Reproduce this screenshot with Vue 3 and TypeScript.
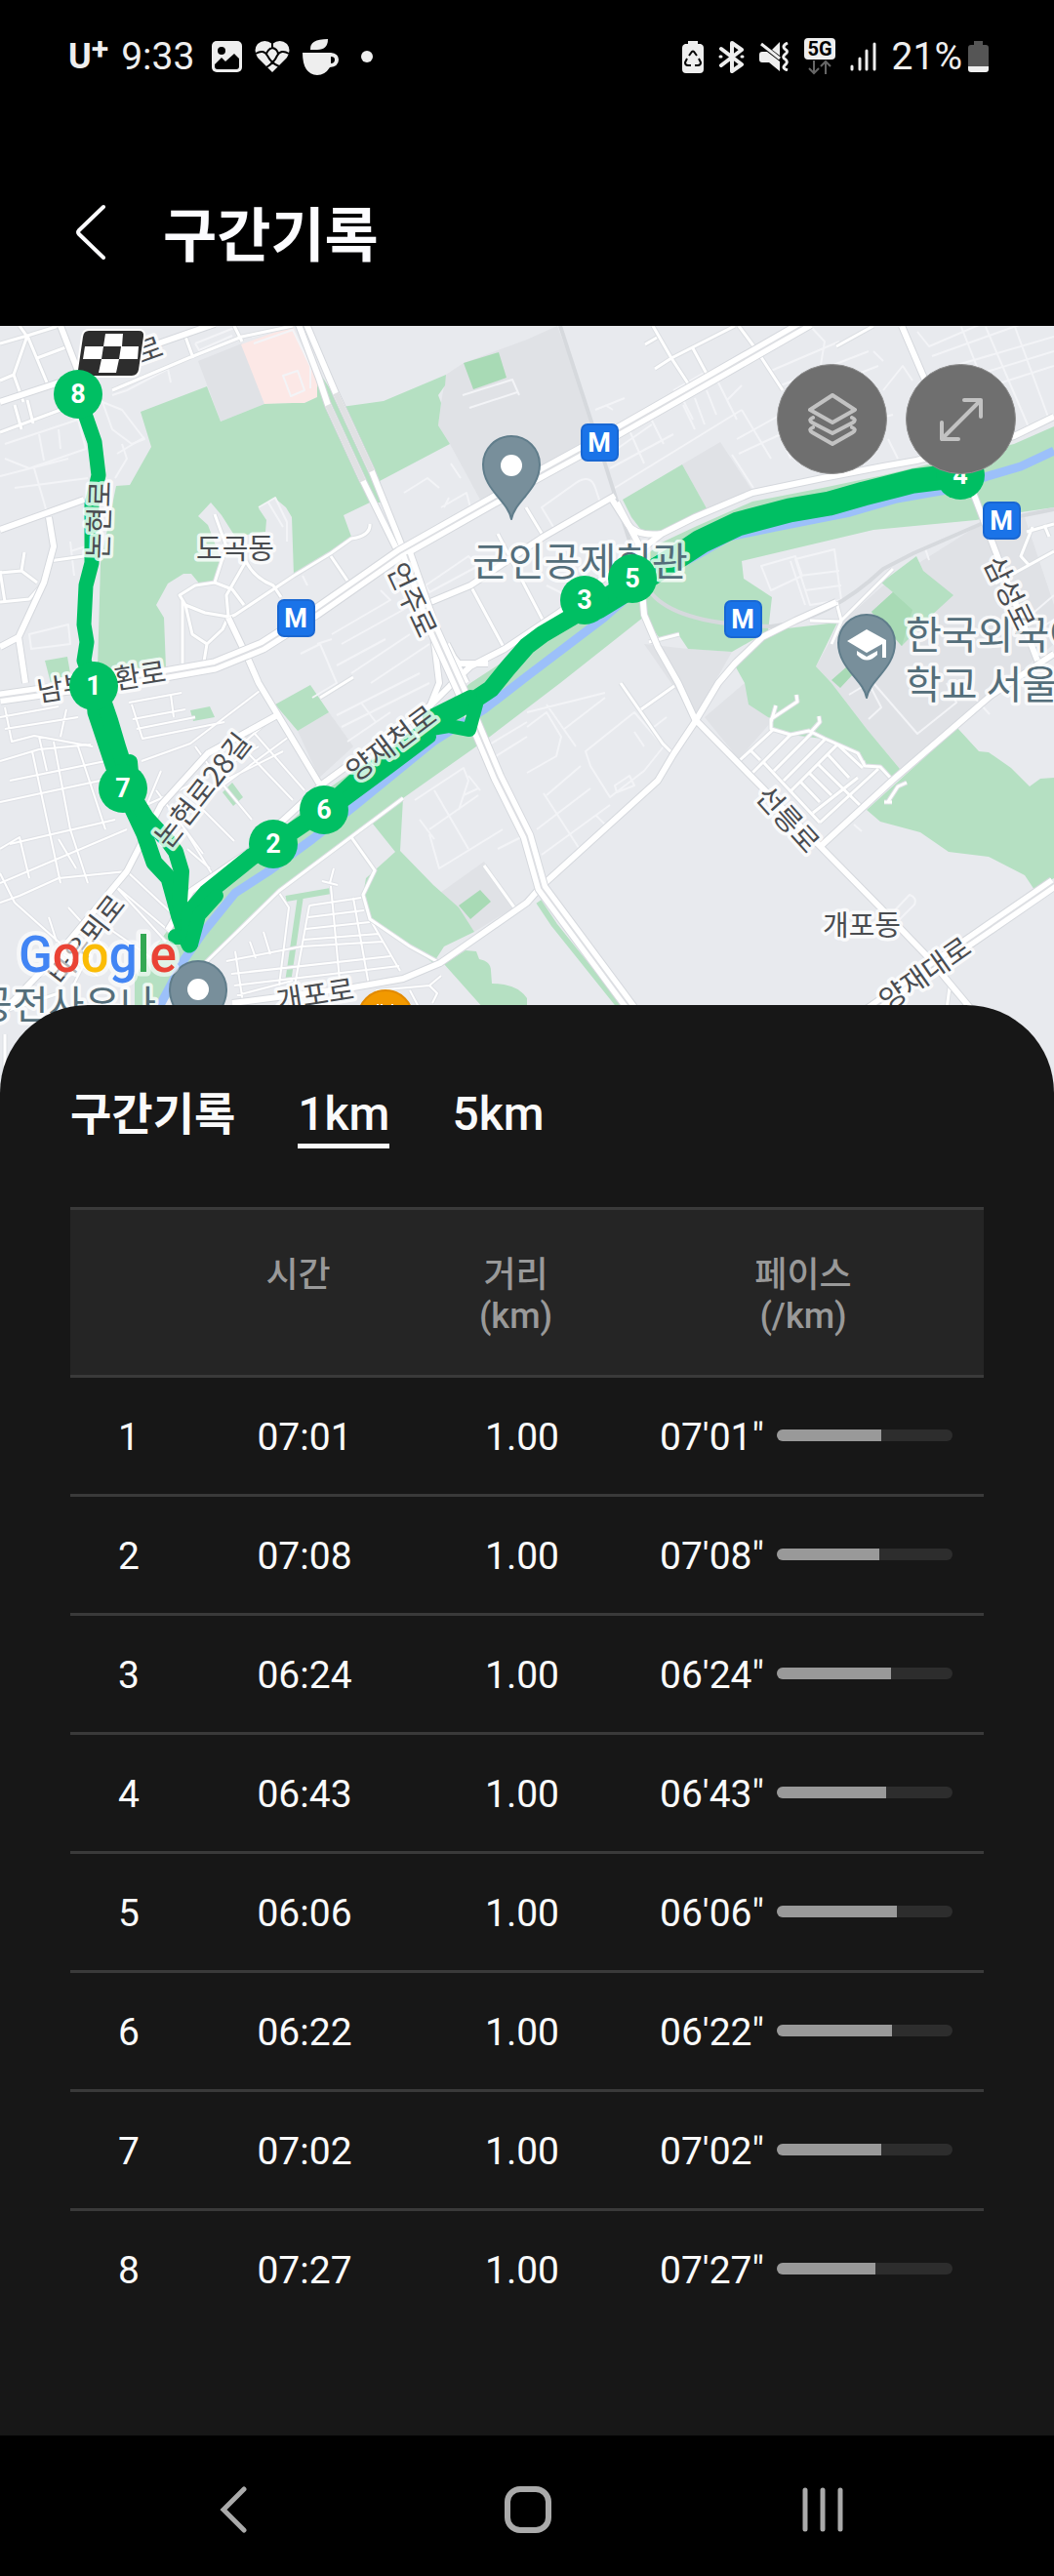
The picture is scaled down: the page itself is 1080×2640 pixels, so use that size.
<script setup lang="ts">
import { ref } from 'vue'

interface Split {
  no: number
  seconds: number
}

interface MapLabel {
  text: string
  x: number
  y: number
  angle: number
}

const splits: Split[] = [421, 428, 384, 403, 366, 382, 422, 447].map((seconds, i) => ({
  no: i + 1,
  seconds,
}))

const units = ['1km', '5km']
const activeUnit = ref('1km')

const pad = (n: number) => String(n).padStart(2, '0')
const clock = (s: number) => `${pad(Math.floor(s / 60))}:${pad(s % 60)}`
const pace = (s: number) => `${pad(Math.floor(s / 60))}'${pad(s % 60)}"`
const barWidth = (s: number) => `${(25000 / s).toFixed(1)}%`

const roadLabels: MapLabel[] = [
  { text: '로', x: 153, y: 359, angle: -20 },
  { text: '논현로', x: 102, y: 533, angle: -88 },
  { text: '도곡동', x: 241, y: 563, angle: 0 },
  { text: '언주로', x: 422, y: 615, angle: 65 },
  { text: '남부순환로', x: 104, y: 699, angle: -9 },
  { text: '논현로28길', x: 208, y: 810, angle: -52 },
  { text: '양재천로', x: 401, y: 762, angle: -37 },
  { text: '바우뫼로', x: 89, y: 963, angle: -52 },
  { text: '개포로', x: 323, y: 1020, angle: -9 },
  { text: '선릉로', x: 807, y: 840, angle: 48 },
  { text: '개포동', x: 883, y: 949, angle: 0 },
  { text: '양재대로', x: 948, y: 998, angle: -35 },
  { text: '삼성로', x: 1034, y: 608, angle: 64 },
]

const stations = [
  { x: 303, y: 633 },
  { x: 614, y: 453 },
  { x: 1026, y: 533 },
  { x: 761, y: 634 },
]

const markers = [
  { n: 8, x: 80, y: 404 },
  { n: 1, x: 96, y: 703 },
  { n: 7, x: 126, y: 808 },
  { n: 2, x: 280, y: 865 },
  { n: 6, x: 332, y: 830 },
  { n: 3, x: 599, y: 615 },
  { n: 5, x: 648, y: 593 },
  { n: 4, x: 984, y: 487 },
]

const wideRoads = [
  'M0 715 L169 691 L220 682 L269 662 L324 627 L410 567 L516 507 L540 493 L633 442 L733 385 L829 330',
  'M888 1038 L990 967 L1080 905',
  'M417 568 L444 645 L472 707 L510 797 L540 857 L555 910 L647 1034',
]

const mainRoads = [
  'M305 330 L327 388 L336 415 L372 493 L406 562',
  'M313 330 L344 403 L381 483 L412 560',
  'M172 953 L196 913 L255 873 L331 803 L441 723 L461 703 L482 683 L517 665 L574 627 L678 547 L712 530 L771 505 L843 490 L905 478 L939 472 L1039 447 L1080 427',
  'M444 650 L450 700 L440 725 M450 655 L470 680 L500 680 M458 660 L478 700',
  'M626 510 L643 537 Q652 550 678 547',
  'M632 515 L654 557 L660 630 L674 663 L695 700 L712 737 L781 807 L840 867 L902 930 L950 980 L995 1034',
  'M840 868 L914 800 L1015 713 L1080 670',
  'M238 1028 L362 1012 L413 1003 L451 987 L540 925 L555 908 L674 800 L690 773 L712 740 L736 700 L753 680 L781 653 L815 636 L857 617',
  'M284 733 L213 772 L165 825 L130 893 L62 975 L0 1040',
  'M234 633 L255 677 L265 700 L327 803',
  'M924 334 L945 383 L990 480 L998 507 L1022 570 L1063 677',
  'M0 412 L79 386 L148 357 L220 332',
  'M62 334 L81 383',
  'M0 543 L86 512',
  'M50 530 L55 560 L45 597 L19 653 L26 700 M0 663 L19 653',
  'M441 617 L482 600 L557 550 L630 508',
]

const sideRoads = [
  'M482 600 L517 665 M510 547 L557 637 M539 520 L557 550 M339 570 L356 595',
  'M688 367 L753 334 M669 334 L688 367 L705 393 M710 357 L724 383 M671 378 L688 367 M661 353 L673 346 M757 334 L774 357 L802 400 M857 355 L895 334',
  'M115 400 L193 367 L248 345 L300 334 M240 334 L248 350 M190 345 L198 367',
  'M0 443 L62 420 M15 415 L22 440 M28 410 L34 434 M0 352 L28 344 L60 334 M28 344 L14 384 L24 412 M28 344 L48 392 M0 390 L14 384 M38 367 L70 355 M20 334 L30 348',
  'M379 537 Q380 549 360 552 L339 567 L301 590 L241 630 L234 633 M234 632 L210 628 L190 620 L184 610 L200 600 L220 597 L232 560 L220 527 M252 575 Q260 592 280 600 L288 612 M252 575 L232 610 L234 632 M220 597 L238 604 L250 620 M187 615 L187 680 M190 620 L197 650 L212 660 L228 645 L234 632 M212 660 L209 678',
  'M0 617 L30 614 L45 597 M50 575 L86 570 M0 585 L5 617 M25 566 L22 585 L38 597 M22 585 L0 587',
  'M413 818 L286 913 L241 957 L207 990 M360 858 L384 892 L372 917 L379 942 L420 970 L451 987 M496 887 L527 930',
  'M636 700 L679 762 L690 773 M657 727 L691 703 M328 715 L362 694 M665 658 L696 650 M857 617 L862 636 L915 583 M830 636 L862 637 L852 660',
  'M757 780 L793 747 M771 792 L810 753 M783 782 L840 843 M793 790 L833 750 M803 800 L845 758 M809 812 L858 763 M833 833 L879 797 M840 843 L900 788 M858 763 L884 787 M848 773 L870 797 M838 783 L883 827 M829 792 L852 815 M821 802 L840 822 M769 769 L779 779',
  'M914 799 L902 786 L886 785 L879 772 L845 757 L829 749 L810 753 L790 747 L790 737 L817 719 L816 712 M790 740 L795 723 M831 750 L840 740 L839 734 M886 785 L884 780',
  'M914 822 L906 822 M909 823 L920 806 L929 802 M1058 540 L1046 570 L1055 580 M1052 545 L1080 537 M1070 538 L1075 550 M1020 598 L1080 565',
  'M973 1012 L970 1034 M973 1012 L998 1034 M0 1038 L60 1018 M5 1060 L5 1110',
]

const streets = [
  'M0 735 L60 724 M5 747 L80 735 M5 725 L12 760 L35 754 L95 765 M68 727 L62 755 M40 755 L48 790 M0 780 L40 768 L93 763 M10 800 L108 780 M0 822 L112 798 M10 865 L118 840 M0 870 L20 858 L30 900 M33 770 L62 905 M55 760 L72 850 L90 905 M80 765 L108 850 M0 905 L130 850 M0 925 L20 918 M15 925 L62 967 M20 918 L60 900 L130 893 M0 895 L15 925 M60 860 L78 890',
  'M132 720 L186 710 M136 737 L190 727 M140 747 L200 735 M175 712 L178 735 M135 722 L146 757 L230 740 M145 780 L195 762 L270 705 M165 790 L140 850 M150 825 L205 800 L282 733 M200 765 L225 800 L258 840 M238 755 L300 820 M255 745 L312 810 M160 810 L208 875 M230 800 L290 770 M215 815 L296 755 M208 830 L240 862 M192 870 L215 890 M240 780 L265 765 M186 845 L220 900',
  'M115 905 L180 960 M130 893 L175 935 M60 975 L100 1000 M95 940 L160 985 M70 930 L120 985 M50 940 L58 965 M100 960 L75 1010 M120 910 L170 965',
  'M232 985 L309 970 L392 965 M237 998 L400 980 M240 1010 L409 990 M243 1020 L300 1005 M241 975 L250 1034 M256 965 L262 982 M270 955 L277 978 M286 915 L296 930 L286 1010 M317 928 L370 920 M316 940 L373 933 M313 952 L379 945 M311 963 L388 957 M317 928 L302 1010 M339 908 L348 1005 M362 920 L378 1010 M379 942 L410 995 M342 890 L338 905 L346 907 M330 903 L338 905',
  'M385 1015 L440 1010 L448 1018 L443 1028 M440 1010 L452 1000 M420 1015 L430 1034',
]

const lanes = [
  'M5 455 L80 430 L88 460 L30 480 L5 470 M40 445 L45 472 M0 488 L70 470 M15 500 L90 490 M35 480 L48 525 M60 440 L62 460 M105 412 L125 420 L148 450 L135 455 L115 440 Z M125 455 L130 470 L118 490 M115 405 L130 400 L172 378 M172 378 L175 392',
  'M200 352 L240 336 M200 352 L204 359 L238 344 M260 352 L300 338 L318 375 L318 398 M290 385 L305 380 L312 400 L298 406 Z M258 345 L298 335',
  'M474 405 L525 389 L532 405 M481 418 L530 402 M414 505 L438 490 L450 500 M452 520 L478 505 L482 520 M460 510 L455 520 M462 475 L472 490 M340 650 L400 615 L390 605 M308 670 L328 660 L345 700 L320 715 M350 660 L440 610 M345 682 L395 655 M360 690 L420 650 M380 700 L440 660 M325 660 L340 655 M436 600 L480 570 L490 580 L440 607 Z M30 650 L70 640 L72 660 L32 665 Z M72 565 L88 560 M72 555 L76 590',
  'M265 520 L282 510 L294 535 L294 555 M275 515 L290 540 M310 590 L315 600 M120 465 L148 448',
  'M610 420 L640 408 M620 415 L628 420 M625 465 L668 435 M625 480 L690 445 M630 500 L760 420 M640 430 L660 475 M665 425 L680 455 M690 400 L725 380 M650 440 L700 410 L710 430 M700 415 L712 440 M712 408 L722 435 M724 400 L734 425 M735 390 L755 430 M745 410 L760 395 M755 450 L800 425 M757 465 L800 445 L810 470 M750 466 L772 500 M760 420 L790 470 M790 380 L860 350 M800 395 L890 360 M810 410 L900 375 M895 360 L905 370 M830 334 L845 350 L840 380',
  'M940 340 L952 355 L1080 300 M955 365 L1075 322 M960 380 L1080 345 M965 395 L1080 360 M970 410 L1080 375 M985 335 L1030 450 M1010 335 L1055 440 M1040 335 L1075 430 M905 400 L925 375 L935 390 M895 430 L915 425 M910 450 L920 470',
  'M555 520 L590 495 Q605 485 610 500 L615 515 L570 545 Z M560 600 L580 610 M575 640 L545 645 M780 580 L815 570 L822 590 L790 605 Z M815 573 L855 563 L862 615 L830 620 Z M820 590 L860 585 M825 605 L862 600 M810 575 L825 620 M948 562 L952 574',
  'M345 733 L430 690 M350 745 L440 700 M356 760 L400 730 M370 720 L385 740 M425 820 L475 787 L480 800 L470 830 M440 850 L490 815 M430 840 L445 860 M445 810 L480 870 M480 795 L492 810 M440 855 L450 890 L515 850 M500 780 L540 755 M490 770 L540 740 M475 815 L490 808 M510 870 L540 855',
  'M540 745 L560 730 L575 755 L570 775 L540 792 M540 730 L620 710 M560 722 L590 765 M577 748 L620 715 M600 770 L650 730 L680 765 L660 790 L625 817 L605 785 Z M630 805 L645 795 L650 805 L632 812 Z M650 750 L660 765 M560 815 L595 785 M550 850 L605 808 M555 876 L625 825 M557 813 L595 872 M610 835 L625 850 M670 745 L683 735',
  'M870 712 L890 700 L903 725 L890 737 M895 700 L940 752 L980 720 L970 700 M915 935 L932 917 Q940 920 937 927 L922 942 Z M985 700 L1014 732 M875 845 L883 852 M1045 640 L1080 610 M1055 650 L1080 635',
]
</script>

<template>
  <div class="screen">
    <div class="status">
      <div class="status-side left">
        <span class="carrier">U<sup>+</sup></span>
        <span class="status-text">9:33</span>
        <svg class="gallery" width="31" height="32" viewBox="0 0 31 32">
          <rect width="31" height="32" rx="5" fill="#eee" />
          <circle cx="10" cy="10" r="4" />
          <path d="M3 24 L10 17 L14 21 L23 13 L28 18 V26 Q28 29 25 29 H6 Q3 29 3 26 Z" />
        </svg>
        <svg width="36" height="34" viewBox="0 0 36 34">
          <path d="M18 33 L3 18 Q-2 10 3 4 Q10 -2 18 4 Q26 -2 33 4 Q38 10 33 18 Z" fill="#eee" />
          <path d="M1 14 Q9 9 13 16 Q17 24 25 27 M35 14 Q27 9 23 16 Q20 23 12 28 M12 14 Q14 9 18 8 Q23 9 24 14 M18 3 V8" fill="none" stroke="#000" stroke-width="2" />
        </svg>
        <svg width="37" height="38" viewBox="0 0 37 38">
          <path d="M0 15 H29 Q37 16 37 22 Q37 29 28 30 Q23 38 15 38 Q0 37 0 15 Z M29 19 V26 Q33 26 33 22 Q33 19 29 19 Z" fill="#eee" fill-rule="evenodd" />
          <path d="M8 12 Q7 1 26 1 Q26 12 15 12 Z" fill="#eee" />
        </svg>
        <span class="dot"></span>
      </div>
      <div class="status-side">
        <svg width="22" height="33" viewBox="0 0 22 33">
          <path d="M6 0 H16 V3 H19 Q22 4 22 7 V29 Q22 33 18 33 H4 Q0 33 0 29 V7 Q0 4 3 3 H6 Z" fill="#eee" />
          <path d="M7 15 L10 11 Q11 10 12 11 L15 15 M17 18 L19 22 Q19 25 16 25 H13 M9 25 H6 Q3 25 3 22 L5 18" fill="none" stroke="#000" stroke-width="2" />
        </svg>
        <svg width="27" height="33" viewBox="0 0 27 33" fill="none" stroke="#eee" stroke-width="4" stroke-linejoin="round" stroke-linecap="round">
          <path d="M3 8 L24 24 L14 31 V2 L24 9 L3 25" />
          <path d="M2 16 h1 M24 16 h1" stroke-width="3" />
        </svg>
        <svg width="31" height="30" viewBox="0 0 31 30">
          <path d="M0 13 Q0 10 3 10 H8 L21 20 V30 L10 21 H3 Q0 21 0 18 Z M13 8 L21 0 V14 Z" fill="#eee" />
          <path d="M2 2 L21 17" stroke="#eee" stroke-width="3" />
          <path d="M29 1 Q23 4 26 7 Q31 10 26 13 Q23 16 27 18 Q30 21 26 24 Q23 27 29 29" fill="none" stroke="#eee" stroke-width="3" />
        </svg>
        <svg width="32" height="38" viewBox="0 0 32 38">
          <rect width="32" height="22" rx="4" fill="#eee" />
          <text x="16" y="18" text-anchor="middle" class="five-g">5G</text>
          <path d="M10 23 V36 M5 31 L10 36 L15 31 M22 37 V24 M17 29 L22 24 L27 29" fill="none" stroke="#666" stroke-width="2" />
        </svg>
        <svg width="27" height="30" viewBox="0 0 27 30" stroke="#eee" stroke-width="3" stroke-linecap="round">
          <path d="M2 25 V28 M10 17 V28 M17 9 V28 M25 2 V28" />
        </svg>
        <span class="status-text percent">21%</span>
        <svg class="battery" width="21" height="32" viewBox="0 0 21 32">
          <path d="M6 0 H15 V4 H18 Q21 4 21 7 V26 H0 V7 Q0 4 3 4 H6 Z" fill="#555" />
          <path d="M0 26 H21 V29 Q21 32 18 32 H3 Q0 32 0 29 Z" fill="#eee" />
        </svg>
      </div>
    </div>

    <header class="header">
      <button class="back" type="button" aria-label="뒤로">
        <svg width="32" height="58" viewBox="0 0 32 58" fill="none" stroke="#fcfcff" stroke-width="4" stroke-linecap="round" stroke-linejoin="round">
          <path d="M29 3 L4 27 Q2 29 4 31 L29 55" />
        </svg>
      </button>
      <h1>구간기록</h1>
    </header>

    <section class="map" aria-label="지도">
      <svg class="map-canvas" viewBox="0 334 1080 788">
        <rect y="334" width="1080" height="788" fill="#e8eaee" />

        <g fill="#e0e2e6">
          <path d="M203 370 L248 352 L271 414 L226 432 Z" />
          <path d="M457 384 L475 372 L540 348 L571 334 L614 450 L492 512 L461 455 L449 436 L452 413 Z" />
          <path d="M699 476 L738 453 L771 503 L724 521 Z" />
          <path d="M305 749 L337 730 L362 765 L327 797 Z" />
          <path d="M451 915 L496 883 L527 930 L486 955 Z" />
          <path d="M836 683 L860 640 L905 600 L1000 540 L1050 530 L1080 620 L1080 660 L1015 713 L922 788 L888 747 L852 700 Z" />
          <path d="M660 660 L705 665 L750 668 L712 735 Z M722 735 L763 700 L790 740 L757 778 Z" />
        </g>
        <path fill="#fce8e6" d="M247 353 L300 334 L305 347 L326 392 L325 407 L312 413 L271 414 Z" />

        <g fill="#b5e0c2">
          <path d="M144 422 L212 396 L226 432 L271 414 L300 413 L312 413 L325 407 L325 378 L350 417 L393 411 L457 384 L456 395 L449 405 L452 413 L449 436 L461 455 L389 493 L392 515 L379 515 L352 528 L360 550 L339 567 L301 590 L299 530 L293 520 L281 510 L265 521 L273 533 L272 545 L241 550 L227 528 L216 515 L203 529 L213 538 L227 575 L220 597 L205 599 L196 588 L188 588 L172 598 L160 620 L168 633 L170 685 L100 685 L103 577 L119 498 L133 497 L155 458 Z" />
          <path d="M138 1034 L138 1000 L196 920 L255 880 L331 812 L441 735 L482 700 L574 640 L678 556 L712 540 L771 514 L843 500 L905 487 L1039 455 L1080 437 L1080 520 L1046 525 L1000 533 L895 543 L760 575 L762 593 L791 612 L787 647 L750 668 L705 665 L695 650 L678 657 L660 632 L574 700 L498 758 L413 818 L286 913 L213 983 L162 1034 Z" />
          <path d="M638 512 L699 476 L724 521 L692 543 L660 547 L647 530 Z" />
          <path d="M781 657 L798 645 L858 638 L836 683 L852 700 L888 747 L922 788 L914 799 L902 785 L886 785 L879 772 L843 757 L810 753 L790 747 L790 737 L767 722 L763 700 L753 682 Z" />
          <path d="M981 746 L1003 770 L1013 771 L1036 787 L1055 806 L1066 798 L1080 797 L1080 900 L1060 912 L1050 897 L1013 878 L972 873 L943 853 L902 842 L888 830 Z" />
          <path d="M939 570 L946 585 L977 610 L953 632 L924 662 L893 627 L915 607 L903 597 Z" />
          <path d="M282 722 L318 702 L337 730 L305 749 Z M195 728 L215 724 L220 735 L198 739 Z M228 812 L238 802 L249 817 L239 826 Z M46 677 L69 673 L72 690 L52 700 Z" />
          <path d="M381 843 L413 818 L410 872 L444 907 L470 930 L486 955 L455 970 L444 987 L417 967 L379 940 L372 917 L375 900 L405 873 Z" />
          <path d="M455 988 L477 974 L488 975 L491 983 Q503 985 503 995 L504 1008 Q530 1008 540 1023 L540 1034 L496 1034 Z" />
        </g>
        <g fill="#a8dab5">
          <path d="M475 372 L511 361 L519 387 L485 399 Z M470 928 L492 912 L503 924 L482 942 Z M893 627 L915 607 L935 625 L924 662 Z M852 697 L868 683 L875 690 L861 705 Z" />
        </g>
        <path d="M293 921 L339 913 M308 918 L295 1007 M552 924 L568 948 L592 978 L637 1034" fill="none" stroke="#b5e0c2" stroke-width="6" />

        <path fill="none" stroke="#9cc0fa" stroke-width="9" d="M162 1034 L189 983 L207 957 L241 915 L275 893 L320 860 L362 827 L444 760 L496 727 L540 693 L619 633 L645 610 L678 588 L712 570 L747 550 L795 540 L871 525 L919 511 L970 502 L1012 488 L1046 478 L1080 462" />

        <path v-for="d in lanes" :key="d" :d="d" class="lane" />
        <path v-for="d in streets" :key="'c' + d" :d="d" class="street-case" />
        <path v-for="d in streets" :key="d" :d="d" class="street" />
        <g class="rail">
          <path d="M574 334 L616 463 L650 570 M665 605 Q690 640 790 642 Q850 635 905 583 L936 567 L1005 537 L1080 522" />
        </g>
        <path v-for="d in sideRoads" :key="'c' + d" :d="d" class="side-case" />
        <path v-for="d in sideRoads" :key="d" :d="d" class="side-road" />
        <path v-for="d in mainRoads" :key="'c' + d" :d="d" class="main-case" />
        <path v-for="d in mainRoads" :key="d" :d="d" class="main-road" />
        <path v-for="d in wideRoads" :key="'c' + d" :d="d" class="wide-case" />
        <path v-for="d in wideRoads" :key="d" :d="d" class="wide-road" />
        <path v-for="d in wideRoads" :key="'m' + d" :d="d" class="wide-middle" />
        <path d="M336 415 L372 493 M344 403 L381 483" fill="none" stroke="#e0e1e3" stroke-width="6" />

        <g class="route">
          <path stroke-width="15" d="M80 404 L88 427 L97 453 L101 487 L94 517 L94 577 L88 600 L86 640 L89 658 L86 677 L96 703" />
          <path stroke-width="17" d="M96 703 L98 730 L117 787 L126 808 L148 855 L158 884 L173 900 L184 940 L194 968" />
          <path stroke-width="16" d="M100 700 L113 738 L121 765 L129 790 L133 781 L136 815 L150 838 L172 862 L180 873 L186 893 L184 925 L194 960 L180 960" />
          <path stroke-width="18" d="M194 966 L195 935 L212 915 L258 878 L280 865 L332 830 L365 800 L408 773 L445 740 L482 720 L503 706 L520 685 L540 662 L556 650 L590 630 L605 622 L648 594 L695 567 L712 558" />
          <path stroke-width="14" d="M196 968 L204 938 L222 918 M436 748 L460 744 L481 748 L488 722 M350 822 L400 785 L440 755 M440 735 L482 714" />
          <path stroke-width="25" d="M600 618 L612 622 L648 600 L706 563 L718 555 L756 537 L809 523 L850 516 L885 506 L936 493 L984 487" />
        </g>

        <g class="place">
          <text x="484" y="590">군인공제회관</text>
          <text x="928" y="665">한국외국어</text>
          <text x="928" y="716">학교 서울</text>
          <text x="-24" y="1044">공전사우나</text>
        </g>
        <g class="road-label">
          <text
            v-for="l in roadLabels"
            :key="l.text + l.x"
            :transform="`translate(${l.x} ${l.y}) rotate(${l.angle})`"
            y="10"
          >{{ l.text }}</text>
        </g>

        <g fill="#788f9b" stroke="#607d8b" stroke-width="2">
          <path d="M524 532 C521 514 495 502 495 476 A29 29 0 0 1 553 476 C553 502 527 514 524 532 Z" />
          <path d="M888 715 C885 697 859 685 859 659 A29 29 0 0 1 917 659 C917 685 891 697 888 715 Z" />
          <path d="M203 1070 C200 1052 174 1040 174 1014 A29 29 0 0 1 232 1014 C232 1040 206 1052 203 1070 Z" />
        </g>
        <circle cx="524" cy="477" r="11" fill="#fff" />
        <circle cx="203" cy="1014" r="11" fill="#fff" />
        <path fill="#fff" d="M868 657 L888 645 L908 656 V674 H904 V660 L888 669 Z M878 667 L888 673 L899 667 V671 Q888 682 878 671 Z" />
        <circle cx="395" cy="1043" r="28" fill="#f29900" stroke="#e28a00" stroke-width="2" />
        <path d="M387 1029 V1040 M391 1029 V1040 M402 1029 V1040" stroke="#fff" stroke-width="2" />

        <g v-for="s in stations" :key="s.x" class="station">
          <rect :x="s.x - 18" :y="s.y - 18" width="37" height="37" rx="6" />
          <text :x="s.x" :y="s.y + 10">M</text>
        </g>

        <path d="M91 338 H142 Q149 338 148 345 L143 379 Q142 386 135 386 H86 Q78 386 79 379 L84 345 Q85 338 91 338 Z" fill="#2d2d2d" stroke="#fff" stroke-width="2" />
        <path fill="#fff" d="M108 342 H126 L125 355 H106 Z M87 355 H106 L104 368 H85 Z M124 355 H142 L141 368 H122 Z M104 368 H122 L119 382 H101 Z" />

        <g v-for="m in markers" :key="m.n" class="marker">
          <circle :cx="m.x" :cy="m.y" r="25" />
          <text :x="m.x" :y="m.y + 9">{{ m.n }}</text>
        </g>

        <text class="google" x="19" y="996">
          <tspan fill="#4285f4">G</tspan><tspan fill="#ea4335">o</tspan><tspan fill="#fbbc05">o</tspan><tspan fill="#4285f4">g</tspan><tspan fill="#34a853">l</tspan><tspan fill="#ea4335">e</tspan>
        </text>
      </svg>

      <div class="map-tools">
        <button type="button" aria-label="지도 유형">
          <svg width="50" height="54" viewBox="0 0 50 54">
            <path d="M25 2 L48 17 L25 30 L2 17 Z" />
            <path d="M5 25 Q0 27 4 30 L25 41 L46 30 Q50 27 45 25 M5 35 Q0 37 4 40 L25 52 L46 40 Q50 37 45 35" />
          </svg>
        </button>
        <button type="button" aria-label="전체 화면">
          <svg width="46" height="46" viewBox="0 0 46 46">
            <path d="M3 43 L43 3 M26 3 H43 V20 M3 26 V43 H20" />
          </svg>
        </button>
      </div>
    </section>

    <main class="sheet">
      <div class="tabs">
        <h2>구간기록</h2>
        <button
          v-for="u in units"
          :key="u"
          type="button"
          :class="{ active: activeUnit === u }"
          @click="activeUnit = u"
        >{{ u }}</button>
      </div>

      <table>
        <colgroup>
          <col class="col-no" />
          <col class="col-time" />
          <col class="col-dist" />
          <col />
        </colgroup>
        <thead>
          <tr>
            <th></th>
            <th class="shifted">시간</th>
            <th class="shifted">거리<br />(km)</th>
            <th>페이스<br />(/km)</th>
          </tr>
        </thead>
        <tbody>
          <tr v-for="s in splits" :key="s.no">
            <td>{{ s.no }}</td>
            <td>{{ clock(s.seconds) }}</td>
            <td>1.00</td>
            <td>
              <div class="pace">
                <span>{{ pace(s.seconds) }}</span>
                <div class="bar"><div class="fill" :style="{ width: barWidth(s.seconds) }"></div></div>
              </div>
            </td>
          </tr>
        </tbody>
      </table>
    </main>

    <nav class="navbar">
      <button type="button" aria-label="이전">
        <svg width="28" height="48" viewBox="0 0 28 48"><path d="M25 3 L4 24 L25 45" stroke-width="5" /></svg>
      </button>
      <button type="button" aria-label="홈">
        <svg width="48" height="48" viewBox="0 0 48 48"><rect x="3" y="3" width="42" height="42" rx="13" stroke-width="6" /></svg>
      </button>
      <button type="button" aria-label="최근 앱">
        <svg width="44" height="48" viewBox="0 0 44 48"><path d="M4 4 V44 M22 4 V44 M40 4 V44" stroke-width="5" /></svg>
      </button>
    </nav>
  </div>
</template>

<style>
body {
  margin: 0;
  background: #000;
}
</style>

<style scoped>
.screen {
  display: flex;
  flex-direction: column;
  min-height: 100vh;
  overflow: hidden;
  background: #000;
  color: #fafafa;
  font-family: Roboto, 'Noto Sans CJK KR', sans-serif;
}

button {
  padding: 0;
  border: 0;
  background: none;
  color: inherit;
  font: inherit;
}

svg {
  display: block;
}

.status {
  display: flex;
  justify-content: space-between;
  height: 116px;
  padding: 0 67px 0 70px;
}

.status-side {
  display: flex;
  align-items: center;
  gap: 15px;
  color: #eee;
}

.status-side.left {
  gap: 13px;
}

.gallery {
  margin-left: 5px;
}

.status-text {
  font-size: 39px;
  line-height: 46px;
}

.percent {
  margin-left: 1px;
}

.battery {
  margin-left: -9px;
}

.carrier {
  display: flex;
  align-items: center;
  font-size: 36px;
  font-weight: 700;
  line-height: 46px;
}

.carrier sup {
  margin-top: -16px;
  font-size: 32px;
  line-height: 32px;
}

.dot {
  width: 12px;
  height: 12px;
  margin-left: 10px;
  border-radius: 50%;
  background: #eee;
}

.five-g {
  fill: #000;
  font-size: 20px;
  font-weight: 700;
}

.header {
  display: flex;
  align-items: center;
  gap: 58px;
  height: 218px;
  padding: 0 77px;
}

.header h1 {
  margin: 36px 0 0;
  color: #fcfcff;
  font-size: 60px;
  font-weight: 700;
  line-height: 72px;
}

.back {
  margin-top: 26px;
}

.map {
  position: relative;
}

.map-canvas {
  width: 100%;
  height: auto;
}

.map-canvas path {
  stroke-linejoin: round;
}

.lane,
.street,
.street-case,
.side-road,
.side-case,
.main-case,
.main-road,
.wide-case,
.wide-road,
.wide-middle,
.rail {
  fill: none;
}

.lane {
  stroke: #f3f4f7;
  stroke-width: 2;
}

.street-case {
  stroke: #dfe1e6;
  stroke-width: 4;
}

.street {
  stroke: #fff;
  stroke-width: 2;
}

.rail {
  stroke: #d6d9dd;
  stroke-width: 4;
}

.side-case {
  stroke: #dcdfe3;
  stroke-width: 5;
}

.side-road {
  stroke: #fff;
  stroke-width: 3;
}

.main-case {
  stroke: #d5d8dd;
  stroke-width: 8;
}

.main-road {
  stroke: #fff;
  stroke-width: 6;
}

.wide-case {
  stroke: #d5d8dd;
  stroke-width: 15;
}

.wide-road {
  stroke: #fff;
  stroke-width: 13;
}

.wide-middle {
  stroke: #dddfe3;
  stroke-width: 2;
}

.route {
  fill: none;
  stroke: #00bf63;
  stroke-linecap: round;
}

.place,
.road-label {
  font-family: 'Noto Sans CJK KR', sans-serif;
  paint-order: stroke;
  stroke: rgba(255, 255, 255, 0.8);
  stroke-width: 7px;
  stroke-linejoin: round;
}

.place {
  fill: #546e7a;
  font-size: 40px;
}

.road-label {
  fill: #494c50;
  font-size: 29px;
  text-anchor: middle;
}

.station rect {
  fill: #1a73e8;
  stroke: #1967d2;
  stroke-width: 2;
}

.station text,
.marker text {
  fill: #fff;
  font-size: 27px;
  font-weight: 700;
  text-anchor: middle;
}

.marker circle {
  fill: #00bf63;
}

.google {
  font-size: 51px;
  font-weight: 500;
  paint-order: stroke;
  stroke: rgba(255, 255, 255, 0.6);
  stroke-width: 9px;
  stroke-linejoin: round;
}

.map-tools {
  position: absolute;
  top: 39px;
  right: 39px;
  display: flex;
  gap: 19px;
}

.map-tools button {
  display: grid;
  place-items: center;
  width: 113px;
  height: 113px;
  border: 1px solid #8d8d8d;
  border-radius: 50%;
  background: #6f6f6f;
}

.map-tools svg {
  fill: none;
  stroke: #c2c2c2;
  stroke-width: 4;
  stroke-linecap: round;
  stroke-linejoin: round;
}

.sheet {
  position: relative;
  flex: 1;
  margin-top: -92px;
  padding: 84px 72px 0;
  border-radius: 90px 90px 0 0;
  background: #171717;
}

.tabs {
  display: flex;
  gap: 64px;
  margin-bottom: 60px;
}

.tabs h2 {
  margin: 0;
  font-size: 46px;
  font-weight: 700;
  line-height: 56px;
}

.tabs button {
  padding-bottom: 2px;
  border-bottom: 5px solid transparent;
  font-size: 48px;
  font-weight: 500;
  line-height: 56px;
}

.tabs button.active {
  border-color: #fafafa;
}

table {
  width: 100%;
  border-spacing: 0;
  table-layout: fixed;
}

.col-no {
  width: 120px;
}

.col-time {
  width: 240px;
}

.col-dist {
  width: 206px;
}

th {
  padding: 46px 0 39px;
  border-top: 3px solid #3a3a3a;
  border-bottom: 3px solid #3a3a3a;
  background: #252525;
  color: #999;
  font-size: 36px;
  font-weight: 500;
  line-height: 42px;
  vertical-align: top;
}

th.shifted {
  padding-right: 13px;
}

td {
  height: 116px;
  padding: 3px 0 0;
  border-bottom: 3px solid #3a3a3a;
  font-size: 39px;
  line-height: 46px;
  text-align: center;
}

tbody tr:last-child td {
  border-bottom: 0;
}

.pace {
  display: flex;
  align-items: center;
  justify-content: center;
  gap: 13px;
  padding-left: 6px;
}

.bar {
  overflow: hidden;
  width: 180px;
  height: 12px;
  margin-bottom: 5px;
  border-radius: 6px;
  background: #2d2d2d;
}

.fill {
  height: 100%;
  background: #999;
}

.navbar {
  display: grid;
  grid-template-columns: repeat(3, 1fr);
  height: 144px;
  padding: 0 86px 0 88px;
  background: #000;
}

.navbar button {
  display: grid;
  place-items: center;
}

.navbar svg {
  margin-bottom: -8px;
  fill: none;
  stroke: #aaa;
  stroke-linecap: round;
}
</style>
